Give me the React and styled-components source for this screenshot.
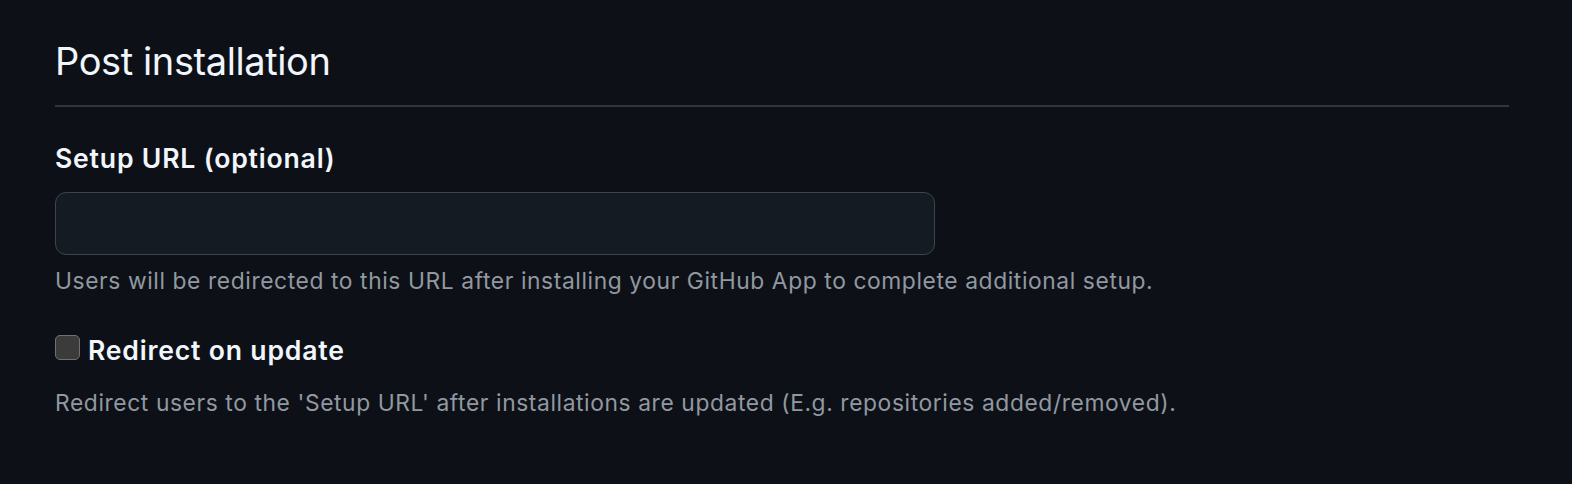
import React from 'react'
import styled, { createGlobalStyle } from 'styled-components'

const GlobalStyle = createGlobalStyle`
  html, body {
    margin: 0;
    padding: 0;
    background: #0d1117;
  }
  body {
    font-family: Inter, "Noto Sans", "Liberation Sans", sans-serif;
    color: #f0f6fc;
  }
`

const Page = styled.div`
  width: 1572px;
  height: 484px;
  box-sizing: border-box;
  padding: 37px 63px 0 55px;
  background: #0d1117;
  display: flex;
  flex-direction: column;
`

const Subhead = styled.div`
  padding-bottom: 20px;
  border-bottom: 2px solid #30363d;
`

const Heading = styled.h2`
  margin: 0;
  font-size: 38px;
  line-height: 48px;
  font-weight: 400;
  color: #f0f6fc;
  letter-spacing: -0.4px;
`

const FormGroup = styled.div`
  display: flex;
  flex-direction: column;
  margin-top: ${props => props.$top}px;
`

const Label = styled.label`
  font-size: 26.6px;
  line-height: 34px;
  font-weight: 600;
  color: #f0f6fc;
  letter-spacing: 0.8px;
`

const Input = styled.input`
  margin-top: 17px;
  width: 880px;
  height: 63px;
  box-sizing: border-box;
  background: #151b23;
  border: 1.5px solid #3d444d;
  border-radius: 11px;
  outline: none;
  color: #f0f6fc;
  font: inherit;
  font-size: 26px;
  padding: 0 16px;
`

const Note = styled.p`
  margin: ${props => props.$top}px 0 0;
  font-size: 22.8px;
  line-height: 34px;
  color: #9198a1;
  letter-spacing: 0.6px;
`

const CheckRow = styled.div`
  display: flex;
  align-items: flex-start;
  gap: 8px;
`

const Box = styled.span`
  margin-top: 2px;
  width: 25px;
  height: 25px;
  box-sizing: border-box;
  background: #3b3b3c;
  border: 1.5px solid #707070;
  border-radius: 5px;
  flex-shrink: 0;
`

export default function App() {
  return (
    <>
      <GlobalStyle />
      <Page>
        <Subhead>
          <Heading>Post installation</Heading>
        </Subhead>
        <FormGroup $top={34}>
          <Label htmlFor="setup-url">Setup URL (optional)</Label>
          <Input id="setup-url" type="text" />
          <Note $top={9}>
            Users will be redirected to this URL after installing your GitHub App to complete additional setup.
          </Note>
        </FormGroup>
        <FormGroup $top={35}>
          <CheckRow>
            <Box role="checkbox" aria-checked="false" />
            <Label>Redirect on update</Label>
          </CheckRow>
          <Note $top={19}>
            Redirect users to the 'Setup URL' after installations are updated (E.g. repositories added/removed).
          </Note>
        </FormGroup>
      </Page>
    </>
  )
}
